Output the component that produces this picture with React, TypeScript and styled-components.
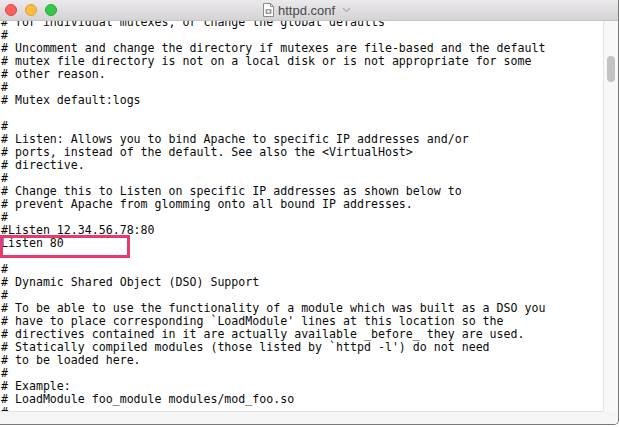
import React from "react";
import styled, { createGlobalStyle } from "styled-components";

const GlobalStyle = createGlobalStyle`
    html, body {
        margin: 0;
        padding: 0;
        background: #ffffff;
    }
`;

const Window = styled.div`
    width: 619px;
    height: 425px;
    box-sizing: border-box;
    display: flex;
    flex-direction: column;
    background: #f5f5f5;
    border-right: 1px solid #777;
    border-bottom: 1px solid #777;
    border-bottom-right-radius: 5px;
    overflow: hidden;
`;

const TitleBar = styled.div`
    height: 21px;
    box-sizing: border-box;
    flex-shrink: 0;
    display: flex;
    align-items: center;
    padding-left: 5px;
    background: linear-gradient(#ebe9eb, #d5d3d5);
    border-bottom: 1px solid #c4c2c4;
`;

const Lights = styled.div`
    display: flex;
    gap: 8px;
    margin-top: -1px;
`;

const Light = styled.span<{ $fill: string; $edge: string }>`
    width: 12px;
    height: 12px;
    box-sizing: border-box;
    border-radius: 50%;
    background: ${p => p.$fill};
    border: 1px solid ${p => p.$edge};
`;

const Title = styled.div`
    display: flex;
    align-items: center;
    gap: 4px;
    margin-left: 206px;
    font-family: "Liberation Sans", Arial, sans-serif;
    font-size: 13px;
    line-height: 15px;
    color: #4a4a4a;
`;

const Body = styled.div`
    flex: 1;
    display: flex;
    min-height: 0;
`;

const Editor = styled.div`
    position: relative;
    flex: 1;
    background: #ffffff;
    overflow: hidden;
    border-right: 1px solid #e3e3e3;
    border-bottom: 1px solid #e3e3e3;
`;

const Code = styled.pre`
    margin: -5px 0 0 0;
    padding-left: 1px;
    font-family: "DejaVu Sans Mono", monospace;
    font-size: 11.6px;
    line-height: 13px;
    color: #0a0a0a;
    white-space: pre;
`;

// annotation drawn over the "Listen 80" line
const Highlight = styled.div`
    position: absolute;
    left: 0;
    top: 214px;
    width: 130px;
    height: 23px;
    box-sizing: border-box;
    border: 3px solid #e8386c;
`;

const ScrollTrack = styled.div`
    width: 14px;
    flex-shrink: 0;
    display: flex;
    justify-content: center;
    background: #f8f8f8;
`;

const Thumb = styled.div`
    width: 8px;
    height: 26px;
    margin-top: 35px;
    border-radius: 4px;
    background: #c3c3c3;
`;

const BottomStrip = styled.div`
    height: 12px;
    flex-shrink: 0;
    background: #f5f5f5;
`;

const DocIcon = () => (
    <svg width="11" height="14" viewBox="0 0 11 14">
        <path d="M0.5 0.5 H7.5 L10.5 3.5 V13.5 H0.5 Z" fill="#fdfdfd" stroke="#8a8a8a" />
        <path d="M7.5 0.5 V3.5 H10.5" fill="none" stroke="#8a8a8a" />
        <rect x="2.5" y="6" width="6" height="5" rx="1" fill="#9a9a9a" />
        <circle cx="5.5" cy="8.5" r="1.4" fill="#eee" />
    </svg>
);

const ChevronIcon = () => (
    <svg width="9" height="6" viewBox="0 0 9 6" style={{ marginLeft: 3 }}>
        <polyline points="1,1 4.5,4.5 8,1" fill="none" stroke="#ababab" strokeWidth="1.1" />
    </svg>
);

const lines = [
    "# for individual mutexes, or change the global defaults",
    "#",
    "# Uncomment and change the directory if mutexes are file-based and the default",
    "# mutex file directory is not on a local disk or is not appropriate for some",
    "# other reason.",
    "#",
    "# Mutex default:logs",
    "",
    "#",
    "# Listen: Allows you to bind Apache to specific IP addresses and/or",
    "# ports, instead of the default. See also the <VirtualHost>",
    "# directive.",
    "#",
    "# Change this to Listen on specific IP addresses as shown below to",
    "# prevent Apache from glomming onto all bound IP addresses.",
    "#",
    "#Listen 12.34.56.78:80",
    "Listen 80",
    "",
    "#",
    "# Dynamic Shared Object (DSO) Support",
    "#",
    "# To be able to use the functionality of a module which was built as a DSO you",
    "# have to place corresponding `LoadModule' lines at this location so the",
    "# directives contained in it are actually available _before_ they are used.",
    "# Statically compiled modules (those listed by `httpd -l') do not need",
    "# to be loaded here.",
    "#",
    "# Example:",
    "# LoadModule foo_module modules/mod_foo.so",
    "#",
    "LoadModule authn_file_module libexec/apache2/mod_authn_file.so",
];

export default function App() {
    return (
        <>
            <GlobalStyle />
            <Window>
                <TitleBar>
                    <Lights>
                        <Light $fill="#fc605c" $edge="#df4744" />
                        <Light $fill="#fdbc40" $edge="#de9f34" />
                        <Light $fill="#34c84a" $edge="#27aa35" />
                    </Lights>
                    <Title>
                        <DocIcon />
                        <span>httpd.conf</span>
                        <ChevronIcon />
                    </Title>
                </TitleBar>
                <Body>
                    <Editor>
                        <Code>{lines.join("\n")}</Code>
                        <Highlight />
                    </Editor>
                    <ScrollTrack>
                        <Thumb />
                    </ScrollTrack>
                </Body>
                <BottomStrip />
            </Window>
        </>
    );
}
